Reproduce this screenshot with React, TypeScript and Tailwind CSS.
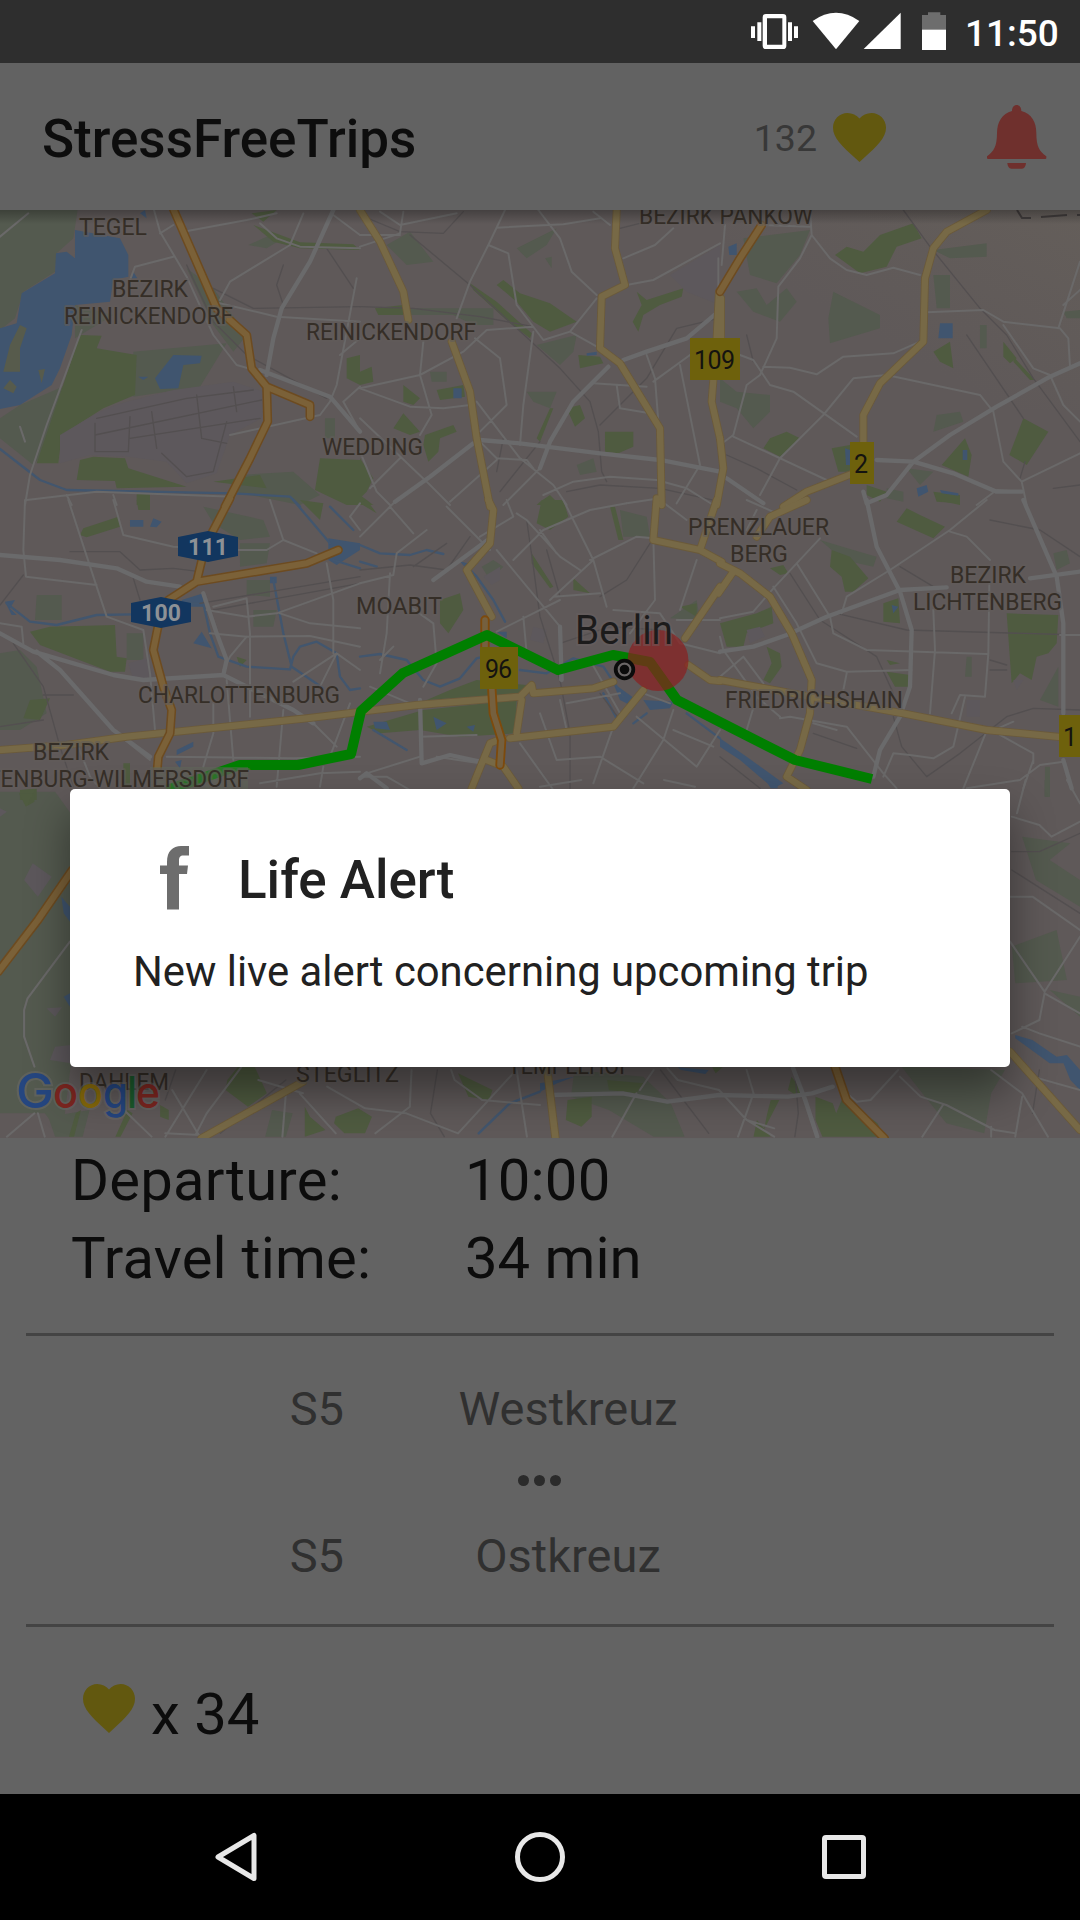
import React from "react";

type TileId = "a" | "b" | "c" | "d" | "e" | "f" | "g" | "h";
type Shapes = Partial<Record<TileId, string>>;

/* The map is split into tiles; each tile stores its geometry in its own local units. */
const tiles: Record<TileId, string> = {
  a: "translate(0 205) scale(.33333)",
  b: "translate(360 205) scale(.33333)",
  c: "translate(720 205) scale(.33333)",
  d: "translate(0 500) scale(.33333)",
  e: "translate(360 500) scale(.33333)",
  f: "translate(720 500) scale(.33333)",
  g: "translate(0 780) scale(.34439 .33333)",
  h: "translate(540 780) scale(.34439 .33333)",
};

const woods: Shapes = {
  a: "M0 0H235L220 100 170 145 165 200 70 260 45 340 0 375Z M0 640L60 600 200 540 150 720 100 780 0 700Z M225 300L340 330 225 400Z M400 440L680 415 600 545 400 575Z M560 190L640 250 740 390 700 440 640 360Z M745 120L800 95 850 100 800 130Z M720 810L880 800 960 870 900 900 700 860Z M975 640H1005V700H975Z",
  b: "M80 120L150 80 220 170 140 180Z M470 130L590 70 560 120 500 160Z M530 420L650 390 640 440 600 480Z M500 560L590 560 570 610 520 590Z M650 780L700 760 710 800 660 810Z M555 160L575 155 575 190Z M210 500H260V530H215Z M150 310H400V360H340L280 330H150Z",
  c: "M70 100L270 75 240 150 170 235 90 210Z M50 260L110 250 140 300 200 250 230 290 180 350 100 320Z M340 260L480 330V370L330 415 325 340Z M640 135L800 115V155L690 160Z M640 210H690V310H650Z M0 520L50 560 150 570V620L100 670 50 610 0 590Z M560 790L640 800 600 840Z M780 360H800V430H780Z M1030 320L1080 315V340H1040Z M650 630L720 620 730 650 640 680Z M500 850L550 860V890L500 880Z",
  d: "M0 460L60 450 110 500 140 640 60 690 0 690Z M610 20L790 60 810 110 720 120 640 70Z M110 285H185V360H105Z M380 400H430V480H380Z M740 240L810 240V290L740 285Z M760 330H830L820 380H760Z M720 130H810L800 190 720 200Z",
  e: "M365 200L400 180 430 200 390 240Z M930 355L1010 300 1020 360Z M780 30L860 50 870 110 790 110Z",
  f: "M300 120L400 150 470 170 460 200 370 180Z M960 600L1015 500V620Z M1000 160L1040 150 1050 190 1010 210Z M740 470H755V530H735Z M975 800H990V890H975Z",
  g: "M0 35H160L205 100V860L180 1070 130 1000H0Z M140 1010L260 990 240 1070H160Z M790 990L850 1000 830 1070H770Z",
  h: "M1050 860L1350 870 1310 940 1290 1060 1180 1030 1110 940Z M100 870L300 890 380 970 420 1070H330L200 990 90 950Z M1400 170L1540 190 1480 240 1568 300V380L1440 300Z M1370 500L1500 450 1530 600 1380 610Z M1480 630L1568 650V710Z M1465 0H1480V50H1465Z",
};

const parks: Shapes = {
  a: "M240 390L305 392 290 430 410 450 405 570 310 610 185 690 175 775 110 775Z M240 765L280 755 375 760 385 790 560 845 350 850 345 828 230 825Z M960 760L1080 765V900H1040L945 855Z M755 25L830 15 790 50Z M760 60L900 112 1060 118 1080 135 900 130 820 110Z M1040 460L1080 450V540L1040 520Z M410 865H450V900H410Z M640 830L780 810 800 850Z",
  b: "M330 235L410 290 515 385 510 400 450 355 340 255Z M430 225L480 265 570 295 650 350 570 380 520 350 470 290 410 240Z M830 260L860 285 970 250 965 275 900 300 850 330 835 380 818 350 845 300Z M45 310L130 300V330H55Z M655 450L720 455 730 475 660 490Z M620 610L660 600 675 640 645 665Z M735 680H820V725L775 745 735 740Z M0 500L35 485 40 530 0 540Z M130 540L180 580 160 600 130 590Z M230 555L310 540 315 575 240 585Z M130 625L180 680 150 690 100 670Z M195 690L280 660 290 680 240 700 235 740 205 770 190 720Z M0 760L40 820 20 860 0 880Z M530 700L570 610 580 610 540 710Z M540 890L570 870 600 900H530Z M0 870L40 900H0Z",
  c: "M345 150L380 125 430 140 480 90 580 55 605 100 530 125 500 185 420 205Z M640 440L690 410 700 490 660 470Z M850 410L890 460 870 475 850 455Z M885 460L945 525 930 525 880 470Z M910 640L985 680 920 780 868 750Z M735 700L755 750 745 815 665 780Z M335 730L390 720V800L355 800Z M150 700L200 680 240 700 180 755 130 730Z M640 860L720 870V895L650 890Z M440 840L500 860 480 890 440 870Z",
  d: "M90 395L150 380 345 375 350 470 380 475 375 515 330 515 120 435Z M250 85L355 50 360 80 260 112 240 105Z M410 0H450V30H415Z M90 600L150 595 120 660 70 655Z M900 0L970 10 960 60Z M710 470L740 480 720 500Z M370 790H390V860H370Z M60 870L110 865V900H60Z",
  e: "M545 0L610 0 625 50 570 90 530 70Z M750 20L765 20 790 120 775 120Z M515 160L580 260 570 265 515 190Z M640 235L690 280 640 270Z M240 300L300 280 310 330 265 400 240 370Z M960 320L1010 310 1010 350Z M270 570L350 540 500 555 480 580 200 600Z M190 630L470 600 465 700 300 710 180 690 60 700 20 680Z M20 0L50 40 0 10Z M0 20L40 40Z",
  f: "M335 150L390 170 445 235 400 275 375 275 365 230 330 200Z M560 25L600 45 675 80 640 115 530 65Z M490 310L535 295 540 370 490 365Z M500 515L570 525V560L525 560Z M860 340L1015 345 1010 430 985 460 950 470 935 540 900 520 875 550Z M0 370L110 340 155 320 160 370 80 400 70 440 20 440Z M140 440L180 460 185 500 150 550 130 540 155 490Z M150 205L190 195 205 220 180 225Z M650 0L720 0V15Z M500 480L540 490 510 495Z",
  g: "M660 900L690 862H740L775 940 720 980 655 930Z M975 1010L1040 985 1080 1010 1060 1060 1000 1060 970 1030Z M220 1000L235 990 215 1070H200Z M370 990L385 1000 350 1070H335Z M465 975L490 990 490 1020 465 1010Z M1330 880L1430 930 1420 960 1360 950Z M885 980L900 1010 945 1050 885 1070Z M55 40H100V65L75 80Z",
  h: "M800 950L850 970 860 1000 880 950 980 1030 1000 1070H820L800 1020Z M80 960L150 950V1010L120 1040 75 1020Z M195 900L300 910 280 940 200 930Z M670 960L695 960 650 1050 660 1000Z M630 1020L670 1070H620Z M730 890L760 930 750 950 720 930Z M500 862H530L510 880Z",
};

const pale: Shapes = {
  a: "M180 690C250 650 300 610 380 590L520 555 700 530 790 560 785 640 690 690 650 805 560 835 500 770 385 755 270 750 180 775Z",
  d: "M385 490L440 475 460 530 400 540Z",
  f: "M80 390L120 380 135 410 90 430Z M740 600H780V650H740Z M880 540L910 540 890 570Z",
  g: "M95 250L150 290 110 350 70 300Z M0 85L20 95 0 110Z M135 685L180 682 160 710Z M160 800L205 795V850L145 840Z",
  b: "M930 210L1080 120V300L980 260Z",
  e: "M370 230L420 200 420 240 395 255Z M520 380L560 390 550 430 510 420Z",
};

const water: Shapes = {
  a: "M225 75L360 100 385 150 385 215 340 225 330 290 225 300 215 390 180 490 155 540 60 600 0 612V370L50 355 65 265 165 205 168 145 200 140 225 160Z M465 520L520 450 605 452 600 475 550 480 535 550 480 552Z M400 200L412 220 395 222Z M420 25L435 15 440 40Z M415 515H445L430 525Z",
  b: "M280 550H305V580H280Z M680 445L710 440 710 450 680 452Z",
  c: "M660 355H698V400L655 400Z M25 125L50 115 50 150 28 150Z M590 850L620 840 625 860 595 875Z M660 855L715 865 715 872 665 865Z M375 730L390 735V780H378Z M728 735H742V765H728Z",
  d: "M15 305L45 300 30 325 50 345 35 345Z M390 60H430V80H390Z M460 55L485 65 470 82 450 80Z M545 300L610 280V320H550Z M580 430L605 395 635 445Z M530 750L580 725 580 740 530 765Z M525 785L545 780 540 805Z M985 115L1080 130V150L1010 195 985 180Z M810 230H830V250H810Z",
  e: "M850 600L940 605 930 625 870 630Z M300 185L325 190 320 205Z M40 665L80 665 90 690 45 685Z M320 680L345 675 340 695Z M220 650L260 670 230 690Z M410 395H440V415Z M760 550L830 600 820 620 780 600Z",
  f: "M0 715L80 770 190 850 160 865 60 780 0 740Z M515 315L535 320 520 340Z",
  g: "M178 350L203 380V425L185 400Z M185 650L203 640V680Z",
  h: "M655 0L690 15 690 25 670 25Z M400 862L490 870 480 882 410 870Z M1380 765L1430 780 1500 830 1530 825 1568 870V930L1540 900 1520 850 1480 850 1380 775Z M0 910L100 890 50 910 0 935Z",
};

const canals: Shapes = {
  a: "M0 732L120 825 200 855 700 865 870 875 900 905",
  d: "M20 310L90 365 170 375 290 345 400 343 M560 310H610L630 400 655 470 740 500 870 508 880 470 900 440 950 425 1010 460 1020 530 1050 570 1080 565 M820 240L850 400 875 500 970 565 M880 0L990 130 M990 20L1060 90 M1000 180L1080 205",
  e: "M0 135L60 160 150 165 200 150 250 162 M0 185L50 200 M310 190L350 230 400 300 435 365 M0 470L60 462 140 480 190 540 240 560 300 535 350 475 370 470 M480 510L560 520 640 475 730 500 790 590 M730 580L770 655 M820 670L860 640 M980 640L1080 715 M40 690L140 750",
  g: "M1390 1060L1480 970 1568 935",
};

const rails: Shapes = {
  a: "M285 690L785 585 M390 700L780 640 M285 655V740H385L390 635 M455 620L470 730 M590 570L605 700 680 715 M290 640L560 580 760 555 M700 545L710 620 M485 745L560 815 640 800 680 650 M640 250L760 310 1080 305 M850 180L830 240 850 300 M980 130L1060 250 M560 180L640 350 740 450 980 580",
  b: "M0 305L160 310 360 335 520 365 M150 90L330 240 600 490 690 590 715 680 725 800 740 830 M0 30L120 80 250 85 310 20 M1075 340L950 370 860 520 720 660 M620 860L720 840 900 850 1080 890 M420 860L540 710 M430 700L410 800 M780 70L860 50",
  c: "M550 15L630 125 780 310 860 390 940 520 1080 710 M740 390L910 640 M80 390L100 470 M20 750L110 790 230 855 M900 820L915 770 M1000 850L1080 840",
  d: "M0 315L70 225 M210 155H360L420 210 520 205 600 215 M40 430L130 560 180 740 220 860 M400 235L420 300 M0 680L130 660 M130 585H220 M600 310L1080 230 M640 330L1080 250",
  e: "M0 210L150 195 260 210 330 110 M500 60L520 200 540 350 600 540 630 700V865 M870 130L800 240 720 290 M560 150L600 290 M260 130L160 200 M600 430L750 380 900 390 M720 580L780 660",
  f: "M210 220L300 360 470 470 520 580 M350 340L560 390 1080 405 M810 60L960 90 1080 170 M540 200L640 260 M620 830L720 760 860 650 940 625 1080 630 M520 650L545 740 620 830 M280 700L410 745 M810 480L860 495 M810 510H860 M0 770L120 865",
  g: "M640 1060L830 900 M1270 870L1250 1000 1290 1070 M510 870L480 960",
  h: "M350 870L490 1060 M740 870L750 1000 740 1070 M1370 215L1450 215 1568 160 M1370 270L1568 400 M1450 870L1430 1000",
};

const streets: Shapes = {
  a: "M85 25L0 95 M245 375L140 660 90 810 75 900 M462 15L480 80 560 215 640 390 710 480 780 500 M390 225L405 185 520 155 M480 85L520 60 M550 80L740 45 830 25 M780 55L830 100 900 125 1080 130 M910 25L870 120 690 230 660 285 M640 290L830 335 1080 350 M1070 220L1010 540 990 590 960 630 690 690 M1080 400L1020 450 M1080 545L1030 590 M80 885L290 860 700 875 M200 870L215 900 M340 870L350 900 M60 665L75 710 M1000 30L1080 90 M1030 590L1080 680",
  b: "M130 20L120 85 0 125 M0 90H120 M60 20L120 60 290 25 M435 15L385 120 330 230 290 340 M385 120L445 145 470 300 550 405 630 380 710 280 M535 15L600 100 635 200 710 270 M410 68L610 58 720 40 M700 20L750 60 M790 160L885 120 940 70 M800 240L880 225 1080 115 M190 410L180 510 215 630 180 690 M0 550L180 510 310 440 380 375 520 365 M0 550L150 605 250 610 330 600 M345 400L420 460 440 600 360 680 M520 380L490 600 480 720 M350 590L480 760 580 840 620 900 M360 710L410 760 500 765 520 790 M270 890L410 765 M540 790L430 900 M550 870L640 830 750 815 890 825 980 850 1060 900 M630 380L720 430 M700 535L860 545 M770 540L780 610 870 625 M860 450L885 520 895 650 M880 530L990 450 1080 400 M960 480L980 580 1020 780 950 895 M0 740L50 860 90 900 M0 640L200 830 270 900 M120 760L30 850 M800 895L900 880 M1075 160V250",
  c: "M15 60L5 180 M270 15L275 90 240 160 175 245 170 400 120 510 M275 90L330 160 380 195 440 210 520 188 600 210 M120 60L270 65 M60 450L100 465 150 540 220 560 410 695 M120 510L80 540 40 690 0 720 M130 485L210 488 290 508 370 455 520 445 600 410 M120 870L180 760 310 630 400 520 500 510 780 570 820 620 850 770 905 830 920 900 M620 322L790 315 850 350 1020 370 1045 400 1050 485 M1080 170L1015 370 M1030 300L1080 255 M850 360L940 490 990 510 1030 600 1080 650 M40 695L320 825 M905 830L1080 745 M770 900L830 855 905 860",
  d: "M75 0L70 150 78 230 290 255 M205 0L290 260 320 350 430 390 450 520 465 690 M0 370L65 380 70 430 M340 0L370 105 520 140 720 150 800 150 850 120 950 160 M810 0L850 120 M980 190L1000 300 1000 460 M640 320L740 295 750 400 750 650 M630 400L740 410 930 408 1080 440 M620 330L740 350 830 340 1080 250 M840 340L930 370 1080 385 M670 510L690 470 740 410 M680 540L700 780 M500 770L880 775 1080 770 M640 610L640 700 610 800 M850 630L830 860 M940 670L1010 740 M1010 460L880 545 M1080 510L1010 460 960 560 M1050 610L990 770 M970 800L960 860 M350 700L450 780 M1080 10L1050 50 1080 90 M235 740L270 830 300 865 M780 850L960 820 1080 815",
  e: "M0 110L110 0 M90 20L160 100 M260 20L390 150 M470 40L500 60 600 170 660 210 M440 0L460 50 360 110 M610 0L700 180 740 320 M460 180L550 90 690 30 800 10 M540 90L590 160 M410 150L600 380 600 540 M690 180L830 110 880 115 885 300 810 400 M580 290L720 280 M700 180L570 300 M410 395L600 300 M760 330L900 340 960 430 1080 460 M0 250L100 225 110 160 200 90 M90 220L80 400 60 520 M150 320L220 370 230 490 190 560 M100 440L60 480 M30 560L150 610 M180 710L350 705 M0 830L80 830 150 870 M180 770L20 820 M480 730L580 870 M540 640L590 780 720 770 850 850 M760 680L700 850 M850 580L930 610 M940 630L910 720 820 865 M830 650L1010 800 1080 690 M940 690L1060 740 M600 600L620 690 M620 610L780 580 M690 480L780 640 M1010 180L960 330 M950 360H1080 M900 0L980 60 M500 460L490 350 M230 770L360 790",
  f: "M110 30L80 90 M80 0L170 40 M800 0L690 90 510 210 380 290 365 340 M690 95L740 110 810 180 M300 115L230 190 160 265 100 335 0 355 M230 190L330 350 340 400 440 450 800 462 M160 260L230 370 290 490 380 515 575 510 M640 330L645 450 630 640 M808 250L805 460 795 590 720 585 695 640 M0 410L10 450 110 590 180 650 M0 530L70 470 130 550 M110 590L80 690 M180 655L210 650 380 680 490 820 530 865 M280 670L350 690 M380 520L370 570 M735 590L700 740 640 775 570 765 520 760 490 830 M1030 785L960 795 900 840 740 865 M795 705L730 865 M800 700L880 665 M840 705L940 760V790 M940 780L910 865 M1020 405H1080",
  g: "M203 485L80 655 70 690V770L100 860 M20 1070L100 1000 M110 1000L130 1070 M360 990L440 1070 M500 930L580 1070 M600 870L480 1070 M700 862L600 1000 570 1060 M480 1060L580 1065 M830 940L820 1070 M870 940L975 1060 M950 920L1060 985 1180 1000 1330 1060 M1090 1060L1190 980 1195 870 M1310 870L1320 900 1400 960 1568 975 M1330 1060L1490 880 M1500 870L1530 1070 M750 900L880 940",
  h: "M280 940L210 1070 M330 870L290 930 M370 865L400 900 520 930 600 1020 680 1070 M600 870L620 940 575 1070 M600 1020L680 1045 M1040 870L960 960 920 965 890 940 M1045 890L1105 950 1180 975 1320 1050 1380 1060 M1170 975L1110 1070 M1310 870L1400 940 1475 1070 M1400 950L1380 1070 M1370 110L1450 135 1485 170 1568 125 M1385 100L1410 0 M1530 0L1568 70 M1365 350H1430L1568 450 M1365 485L1465 635 1568 470 M1465 640L1568 700 M1465 640L1450 720 1370 760 M1400 740L1450 760 1568 800 M1430 890L1568 930 M1310 1040V1070 M0 20L120 0 M360 0L450 20",
};

const avenues: Shapes = {
  a: "M1000 15L930 170 845 310 820 400 800 510 M780 495L990 575 1080 680",
  b: "M360 705L480 715 720 745 900 765 1080 800 M790 465L860 440 980 400 1075 320 M745 485L640 590 570 710 540 790 M105 890L210 815 340 715",
  c: "M470 765L580 770 700 805 830 860 905 860 M430 860L440 895 500 870 580 770 690 690 830 605 990 515 1080 475 M20 820L130 895",
  d: "M0 165L180 180 350 205 440 245 540 260 M0 400L100 455 340 525 430 540 670 525 760 570 880 630 940 670 M110 455L180 510 340 690 450 770 M610 280L650 400 680 480 670 525",
  e: "M220 240L390 115 M0 835L20 820 80 865 M180 600L185 790 270 765 360 785 M600 380L605 540",
  f: "M0 455L100 440 200 405 320 350 540 270 680 262 M930 235L1080 215 M440 0L470 140 540 275 575 390 570 560 540 650 480 750 460 830 M910 0L1010 230 1030 370 1030 640 M1030 780L1055 865",
  h: "M30 945L240 940 370 965 520 945 720 950 790 940 850 920 M735 865L770 960 805 1070",
};

const mainRoads: Shapes = {
  b: "M0 15L60 110 130 260 145 345 M275 410L330 560 350 700 390 905 M770 15L765 130 795 240 725 275 720 430 780 475 900 670 905 900 M1077 260L1070 400 1055 590 1080 700",
  c: "M3 280V400 M0 700L10 790 -10 900 M800 15L680 80 640 130 615 220 610 410 480 535 430 630V710 M400 805L260 860 190 905",
  d: "M0 750L200 735 380 710 530 695 920 655 1085 635",
  e: "M385 0L400 30 390 130 320 210 395 350 M890 -5L880 120 1020 150 1085 185 M1070 0L1020 150 M1080 260L975 415 M0 635L170 615 480 590 515 555 520 580 700 565 760 545 M485 600L470 700 M450 715L760 680 850 570 M430 715L390 730 335 865 M380 780L430 800 475 865 M985 495L1050 540 1080 543",
  f: "M0 190L60 220 150 290 215 400 275 540 270 640 240 750 200 830 260 870 M40 215L-5 280 M260 0L150 50 110 110 M0 540L270 590 550 640 800 690 1030 712",
  g: "M585 1075L880 905",
  h: "M20 862L45 1075 M1365 815L1568 1050",
};

const highways: Shapes = {
  a: "M520 12L650 310 740 390 755 490 800 545 930 600V635 M800 545L803 650 750 760 675 905",
  c: "M125 60L60 160 0 260",
  d: "M690 -5L635 100 M608 170L590 245 505 300 M590 245L920 190 1015 150 M475 375L460 450 490 560 515 630 510 700 475 770 472 805",
  g: "M210 270L110 420 -5 575",
  h: "M855 855L890 960 1000 1075",
};

const tunnels: Shapes = {
  e: "M375 360V440 M395 560L400 640 425 720 420 795",
};

const islands: Shapes = {
  a: "M60 360L80 370 60 430 60 500 10 500 30 420Z M10 550L30 525 50 545 40 565Z M115 495L135 492 125 535Z",
};

function Fill({ shapes, className }: { shapes: Shapes; className: string }) {
  return (
    <g className={className}>
      {(Object.keys(shapes) as TileId[]).map((t) => (
        <path key={t} d={shapes[t]} transform={tiles[t]} />
      ))}
    </g>
  );
}

function Line({ shapes, className, width }: { shapes: Shapes; className: string; width: number }) {
  return (
    <g className={className} fill="none" strokeWidth={width} strokeLinecap="round" strokeLinejoin="round">
      {(Object.keys(shapes) as TileId[]).map((t) => (
        <path key={t} d={shapes[t]} transform={tiles[t]} />
      ))}
    </g>
  );
}

const labels: [string, number, number, number][] = [
  ["TEGEL", 79, 235, 68],
  ["BEZIRK", 112, 297, 76],
  ["REINICKENDORF", 64, 324, 169],
  ["REINICKENDORF", 306, 340, 170],
  ["WEDDING", 322, 455, 101],
  ["BEZIRK PANKOW", 639, 224, 174],
  ["MOABIT", 356, 614, 86],
  ["CHARLOTTENBURG", 138, 703, 202],
  ["BEZIRK", 33, 760, 76],
  ["TENBURG-WILMERSDORF", -13, 787, 262],
  ["PRENZLAUER", 688, 535, 141],
  ["BERG", 730, 562, 58],
  ["BEZIRK", 950, 583, 76],
  ["LICHTENBERG", 913, 610, 149],
  ["FRIEDRICHSHAIN", 725, 708, 178],
  ["DAHLEM", 79, 1090, 90],
  ["STEGLITZ", 296, 1082, 103],
  ["TEMPELHOF", 508, 1074, 123],
];

function CityMap() {
  return (
    <svg className="block h-[928px] w-full shrink-0 bg-[#5f5959]" viewBox="0 210 1080 928">
      <defs>
        <linearGradient id="barShade" x1="0" y1="0" x2="0" y2="1">
          <stop offset="0" stopColor="#000" stopOpacity=".28" />
          <stop offset="1" stopColor="#000" stopOpacity="0" />
        </linearGradient>
        <linearGradient id="suburb" x1="0" y1="1" x2="1" y2="0">
          <stop offset=".4" stopColor="#635d59" stopOpacity="0" />
          <stop offset="1" stopColor="#645e5a" />
        </linearGradient>
      </defs>
      <rect x="720" y="210" width="360" height="200" fill="url(#suburb)" />
      <Fill shapes={woods} className="fill-[#545a4f]" />
      <Fill shapes={parks} className="fill-[#4f5b40]" />
      <Fill shapes={pale} className="fill-[#5d585c]" />
      <Fill shapes={water} className="fill-[#40556f]" />
      <Fill shapes={islands} className="fill-[#575b4c]" />
      <Line shapes={canals} className="stroke-[#42566e]" width={7} />
      <Line shapes={rails} className="stroke-[#534f50]" width={4} />
      <Line shapes={streets} className="stroke-[#6a6969]" width={6} />
      <Line shapes={avenues} className="stroke-[#6a6a6b]" width={13} />
      <Line shapes={mainRoads} className="stroke-[#6b5a3a]" width={24} />
      <Line shapes={mainRoads} className="stroke-[#776946]" width={19} />
      <Line shapes={highways} className="stroke-[#6d4b20]" width={27} />
      <Line shapes={highways} className="stroke-[#7b6138]" width={18} />
      <Line shapes={tunnels} className="stroke-[#7d4a0c]" width={28} />
      <Line shapes={tunnels} className="stroke-[#75603f]" width={17} />
      <path
        d="M167 790L240 765H298L351 754 361 711 403 673 487 635 558 670 613 655 650 662 677 700 720 722 795 760 872 779"
        fill="none"
        stroke="#007f00"
        strokeWidth="10"
        strokeLinejoin="round"
      />
      <path d="M150 767H248V789H150Z" fill="#5f6a58" fillOpacity=".45" />
      <path d="M1017 210L1022 218H1031M1041 217L1067 215M1077 215H1080" stroke="#3f3b3b" strokeWidth="2" fill="none" />
      <g
        className="fill-[#352e27] [font-family:Roboto,sans-serif] text-[24px]"
        stroke="#615c5a"
        strokeOpacity=".6"
        strokeWidth="4"
        strokeLinejoin="round"
        paintOrder="stroke"
      >
        {labels.map(([text, x, y, w], i) => (
          <text key={i} x={x} y={y} textLength={w} lengthAdjust="spacingAndGlyphs">
            {text}
          </text>
        ))}
      </g>
      <g fill="#6e610c">
        <rect x="690" y="338" width="50" height="42" />
        <rect x="850" y="442" width="24" height="42" />
        <rect x="1059" y="715" width="30" height="42" />
        <rect x="480" y="647" width="38" height="42" />
      </g>
      <g className="fill-[#141310] [font-family:Roboto,sans-serif] text-[25px]">
        <text x="694" y="369" textLength="41">109</text>
        <text x="854" y="473">2</text>
        <text x="1063" y="746">1</text>
        <text x="485" y="678" textLength="27">96</text>
      </g>
      <g fill="#12365f">
        <path d="M178 537L208 531 238 537V556L208 562 178 556Z" />
        <path d="M131 603L161 597 191 603V622L161 628 131 622Z" />
      </g>
      <g className="fill-[#8d9196] [font-family:Roboto,sans-serif] text-[23px] font-bold">
        <text x="188" y="555" textLength="40">111</text>
        <text x="141" y="621" textLength="40">100</text>
      </g>
      <circle cx="658" cy="660.5" r="30.5" fill="#8c1e1e" fillOpacity=".68" />
      <text x="575" y="644" textLength="98" lengthAdjust="spacingAndGlyphs" className="fill-[#1c1b1b] [font-family:Roboto,sans-serif] text-[40px]" stroke="#6a6060" strokeOpacity=".45" strokeWidth="4" paintOrder="stroke">
        Berlin
      </text>
      <circle cx="624.5" cy="669.5" r="8.8" fill="#6a6666" stroke="#0b0b0b" strokeWidth="3.8" />
      <circle cx="624.5" cy="669.5" r="4.8" fill="#0b0b0b" />
      <g className="[font-family:Inter,sans-serif] text-[44px] font-medium" stroke="#6a6a68" strokeOpacity=".55" strokeWidth="4" paintOrder="stroke">
        <text x="16" y="1108" textLength="38" lengthAdjust="spacingAndGlyphs" fill="#254680" className="text-[48px]">G</text>
        <text x="53" y="1108" textLength="25" lengthAdjust="spacingAndGlyphs" fill="#7d2620">o</text>
        <text x="78" y="1108" textLength="25" lengthAdjust="spacingAndGlyphs" fill="#86690b">o</text>
        <text x="103" y="1108" textLength="25" lengthAdjust="spacingAndGlyphs" fill="#254680">g</text>
        <text x="127" y="1108" textLength="10" lengthAdjust="spacingAndGlyphs" fill="#1b5b2c">l</text>
        <text x="136" y="1108" textLength="24" lengthAdjust="spacingAndGlyphs" fill="#7d2620">e</text>
      </g>
      <rect x="0" y="210" width="1080" height="14" fill="url(#barShade)" />
    </svg>
  );
}

function Heart({ className }: { className: string }) {
  return (
    <svg className={className} viewBox="2 3 20 18.350" preserveAspectRatio="none" fill="#62580f">
      <path d="M12 21.350l-1.450-1.320C5.400 15.360 2 12.280 2 8.500 2 5.420 4.420 3 7.500 3c1.740 0 3.410.810 4.500 2.090C13.090 3.810 14.760 3 16.500 3 19.580 3 22 5.420 22 8.500c0 3.780-3.400 6.860-8.550 11.540L12 21.350z" />
    </svg>
  );
}

function StatusBar() {
  return (
    <div className="flex h-[63px] shrink-0 items-center justify-end bg-[#2e2e2e] pr-[20px]">
      <svg className="h-[63px] w-[210px]" viewBox="0 0 630 189" fill="#fff">
        <path d="M3 79h12v35H3zM22 67h12v56H22zM114 67h12v56h-12zM132 79h12v35h-12z" />
        <path fillRule="evenodd" d="M48 42h51q10 0 10 10v85q0 10-10 10H48q-10 0-10-10V52q0-10 10-10zM51 55v79h46V55z" />
        <path d="M188 63Q258 14 328 63L258 148Z" />
        <path d="M341 147L452 38V147Z" />
        <path d="M516 45h18v-8h37v8h17v45h-72z" fill="#6d6d6d" />
        <path d="M516 89h72v61h-72z" />
      </svg>
      <span className="ml-[5px] w-[95px] pt-[4px] text-[37px] font-medium leading-none text-white">11:50</span>
    </div>
  );
}

function AppBar() {
  return (
    <header className="flex h-[147px] shrink-0 items-center bg-[#626262] pl-[42px] pr-[33px]">
      <h1 className="mt-[5px] flex-1 text-[53px] font-medium leading-none text-[#0d0d0d]">StressFreeTrips</h1>
      <span className="mt-[4px] text-[37.500px] leading-none text-[#383838]">132</span>
      <Heart className="ml-[16px] mt-[1px] h-[49px] w-[53px]" />
      <svg className="ml-[101px] h-[64px] w-[60px]" viewBox="0 0 180 192" fill="#6f302d">
        <path d="M0 160V154C20 140 30 125 30 85C30 50 45 27 75 18C75-6 103-6 103 18C134 27 148 50 148 85C148 125 158 140 178 154V160Q178 162 175 162H4Q0 162 0 160Z" />
        <path d="M61 174H117Q116 190 105 191H73Q62 190 61 174Z" />
      </svg>
    </header>
  );
}

function TripInfo() {
  return (
    <section className="flex h-[656px] shrink-0 flex-col bg-[#636363] px-[26px]">
      <div className="grid h-[195px] grid-cols-[394px_1fr] content-start pl-[45px] pt-[3px] text-[58px] leading-[78px] text-[#0c0c0c]">
        <span className="tracking-[0.200px]">Departure:</span>
        <span className="tracking-[0.200px]">10:00</span>
        <span className="tracking-[0.200px]">Travel time:</span>
        <span>34 min</span>
      </div>
      <div className="h-[3px] bg-[#444444]" />
      <div className="flex h-[288px] flex-col pt-[36px] text-[47px] leading-[73px] text-[#303030]">
        <div className="flex">
          <span className="w-[318px] text-right">S5</span>
          <span className="w-[448px] text-center">Westkreuz</span>
        </div>
        <div className="flex h-[74px] items-center gap-[5px] pb-[4px] pl-[492px]">
          <i className="size-[11px] rounded-full bg-[#2b2b2b]" />
          <i className="size-[11px] rounded-full bg-[#2b2b2b]" />
          <i className="size-[11px] rounded-full bg-[#2b2b2b]" />
        </div>
        <div className="flex">
          <span className="w-[318px] text-right">S5</span>
          <span className="w-[448px] text-center">Ostkreuz</span>
        </div>
      </div>
      <div className="h-[3px] bg-[#444444]" />
      <div className="flex pl-[57px] pt-[54px]">
        <Heart className="mt-[3px] h-[49px] w-[52px]" />
        <span className="ml-[16px] text-[58px] leading-[66px] text-[#0c0c0c]">x 34</span>
      </div>
    </section>
  );
}

function NavBar() {
  return (
    <nav className="flex h-[126px] shrink-0 items-center justify-between bg-black pl-[213px] pr-[214px]">
      <svg className="h-[52px] w-[45px]" viewBox="0 0 45 52" fill="none" stroke="#e8e8e8" strokeWidth="5" strokeLinejoin="round">
        <path d="M41 4.500V47.500L5 26Z" />
      </svg>
      <span className="size-[50px] rounded-full border-5 border-[#e8e8e8]" />
      <span className="size-[44px] rounded-[4px] border-5 border-[#e8e8e8]" />
    </nav>
  );
}

function AlertDialog() {
  return (
    <div role="dialog" className="absolute left-[70px] top-[789px] h-[278px] w-[940px] rounded-[5px] bg-white shadow-[0_24px_44px_rgba(0,0,0,0.42)]">
      <div className="flex items-start pl-[90px] pt-[57px]">
        <svg className="h-[64px] w-[30px]" viewBox="0 0 30 64" fill="#6d6d6d">
          <path d="M7 63.500V28H0V19.500H7V16C7 5 13 0 21 0H29V9.500H23.500C20 9.500 19 11.500 19 14.500V19.500H28L27 28H19V63.500Z" />
        </svg>
        <h2 className="ml-[48px] mt-[8px] text-[53px] font-medium leading-[52px] text-[#212121]">Life Alert</h2>
      </div>
      <p className="ml-[63px] mt-[37px] text-[41.800px] leading-[50px] text-[#212121]">New live alert concerning upcoming trip</p>
    </div>
  );
}

export default function App() {
  return (
    <div className="relative flex h-[1920px] w-[1080px] flex-col overflow-hidden bg-black [font-family:Roboto,sans-serif]">
      <StatusBar />
      <AppBar />
      <CityMap />
      <TripInfo />
      <NavBar />
      <AlertDialog />
    </div>
  );
}
